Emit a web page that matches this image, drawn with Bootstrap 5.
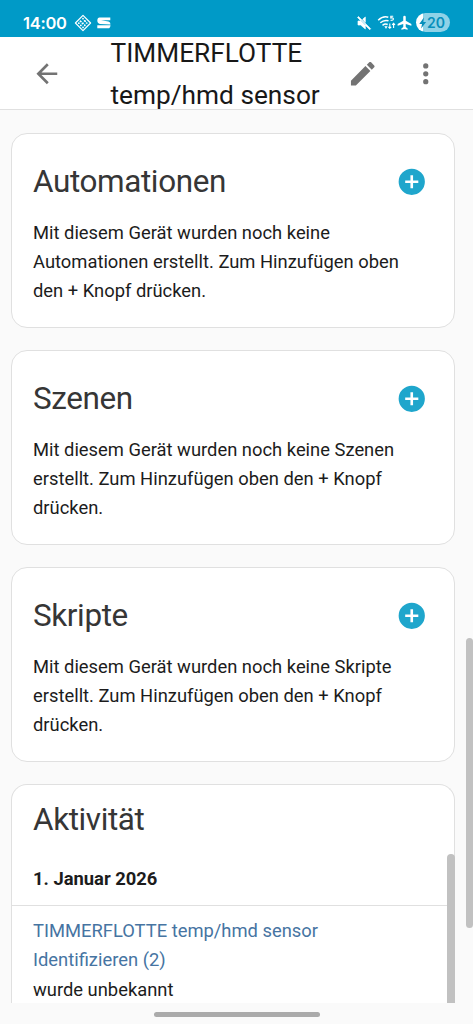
<!DOCTYPE html>
<html lang="de">
<head>
<meta charset="utf-8">
<meta name="viewport" content="width=device-width, initial-scale=1">
<title>TIMMERFLOTTE temp/hmd sensor</title>
<link href="https://cdn.jsdelivr.net/npm/bootstrap@5.3.0/dist/css/bootstrap.min.css" rel="stylesheet">
<style>
  html, body { height: 100%; }
  body { font-family: Roboto, sans-serif; font-size: 18.38px; line-height: 29.3px; color: #1c1c1c; background: #fafafa; overflow: hidden; }
  .screen { height: 1024px; }
  .status { height: 37px; background: #009ac7; color: #fff; padding: 8px 23px 0 23px; }
  .clock { font-family: Inter, sans-serif; font-size: 16.5px; font-weight: 600; line-height: 28px; width: 51px; white-space: nowrap; letter-spacing: -.25px; }
  .battery { width: 34px; height: 19px; border-radius: 10px; margin-left: 4px; background: linear-gradient(90deg, #fff 7px, #8fd2e7 7px); color: #078fbb; font: 600 14px/19px Inter, sans-serif; padding: 0 5px 0 1px; }
  .topbar { height: 73px; background: #fff; border-bottom: 1px solid #e0e0e0; padding: 1px 31.5px 0 31px; color: #737373; }
  .topbar h1 { font-size: 26.25px; line-height: 42px; font-weight: 400; color: #181818; margin-left: 48px; white-space: nowrap; }
  .ico { width: 31.5px; height: 31.5px; fill: currentColor; flex: none; display: block; }
  .view { padding: 23px 18px 0 11px; gap: 22px; height: 893px; }
  .panel { --bs-card-border-color: #e0e0e0; --bs-card-border-radius: 16px; --bs-card-inner-border-radius: 15px; --bs-card-bg: #fff; color: inherit; height: 195px; flex: none; padding: 0 26.5px 0 21px; }
  .panel h2 { font-size: 31.45px; line-height: 48px; font-weight: 400; letter-spacing: -.38px; color: #363636; }
  .panel-head { margin-top: 23.6px; }
  .panel p { margin-top: 12px; white-space: nowrap; }
  .add { color: #1fa6cc; }
  .panel.activity { height: 219px; border-bottom: 0; border-radius: 16px 16px 0 0; padding: 0; }
  .activity h2 { padding: 11px 0 0 21px; flex: none; }
  .day { padding: 20px 21px 11px; height: 62px; border-bottom: 1px solid #e0e0e0; font-weight: 700; flex: none; }
  .entry { padding: 10px 21px 0; flex: none; }
  .entry a { color: #4674a2; }
  .bar-inner { position: absolute; right: -1px; top: 69px; width: 8px; bottom: 0; background: #c1c1c1; border-radius: 4px 4px 0 0; }
  .bar-page { position: absolute; right: 0; top: 638px; width: 7px; height: 290px; background: #c1c1c1; border-radius: 4px; }
  .home { width: 166px; height: 5px; border-radius: 3px; background: #ababab; margin-top: 9px; }
</style>
<script src="https://cdn.jsdelivr.net/npm/bootstrap@5.3.0/dist/js/bootstrap.bundle.min.js"></script>
</head>
<body>
<div class="screen position-relative overflow-hidden">
  <div class="status d-flex justify-content-between">
    <div class="d-flex align-items-center">
      <span class="clock">14:00</span>
      <svg width="18" height="18" viewBox="0 0 18 18" fill="none" stroke="#fff" aria-hidden="true"><path d="M9 1.4 16.6 9 9 16.6 1.4 9Z" stroke-width="1.2" stroke-linejoin="round"/><path d="M9 4.6v.1M6.4 7.2l.6.4M10.6 6.8l.6.4M4.8 9.2h.1M8.4 9.6l.6-.4M12.6 9h.2M6.8 11.4h.1M10.8 11.2v.3M9 13.4h.1" stroke-width="1.7" stroke-linecap="round"/></svg>
      <svg style="margin-left:5px" width="14" height="12" viewBox="0 0 14 12" fill="#fff" aria-hidden="true"><path d="M2.5 .5H13.3V3.3H4L11.5 4.4Q13.5 5 13.5 7.4L3 6.9Q.3 6.6 .3 3.6 .5.5 2.5.5ZM.3 8.2 13.5 8.2Q13.3 11.3 11.2 11.3H.3Z"/></svg>
    </div>
    <div class="d-flex align-items-center">
      <svg width="16" height="16" viewBox="0 0 24 24" fill="#fff" aria-hidden="true"><path d="M3 9v6h4l7 6v-7L8 8 7 9ZM10 6.5 14 3v8ZM2.3 3.7 3.7 2.3 22 20.6 20.6 22Z" stroke="#fff" stroke-width="1"/></svg>
      <svg style="margin-left:5px" width="20" height="17" viewBox="0 0 20 17" fill="none" stroke="#fff" aria-hidden="true"><path d="M1.2 6.2Q6 1.5 11.3 3.2M3.3 8.8Q7 5.5 11.5 6.8M5.5 11.4Q8 9.4 10.7 10.5" stroke-width="1.5"/><path d="M7.8 12.4h2.4L9 14.4Z" fill="#fff" stroke-width=".6"/><path d="M16.2 2.2h-2.4v1.8q2.6-.4 2.6 1T13.6 6.4M12.8 9.5v4.5M11.4 12.8l1.4 1.5 1.4-1.5M16.6 14V9.4M15.2 10.9l1.4-1.5 1.4 1.5" stroke-width="1.1"/></svg>
      <svg width="15" height="15" viewBox="0 0 24 24" fill="#fff" aria-hidden="true"><path d="M10 3a2 2 0 0 1 4 0V9l9 5.5v2.8L14 14.5v4.7l3 2.2V23.5l-5-1.2-5 1.2v-2.1l3-2.2v-4.7L1 17.3v-2.8L10 9Z"/></svg>
      <div class="battery d-flex align-items-center justify-content-between"><svg width="11" height="12" viewBox="0 0 11 12" fill="currentColor" aria-hidden="true"><path d="M7.5 0 2.5 7H5.5L4.5 12 10 4.8H7Z"/></svg><span>20</span></div>
    </div>
  </div>

  <header class="topbar d-flex align-items-center">
    <svg class="ico" viewBox="0 0 24 24" aria-label="Zurück"><path d="M20,11V13H8L13.5,18.5L12.08,19.92L4.16,12L12.08,4.08L13.5,5.5L8,11H20Z"/></svg>
    <h1 class="mb-0">TIMMERFLOTTE<br>temp/hmd sensor</h1>
    <svg class="ico ms-auto" viewBox="0 0 24 24" aria-label="Bearbeiten"><path d="M20.71,7.04C21.1,6.65 21.1,6 20.71,5.63L18.37,3.29C18,2.9 17.35,2.9 16.96,3.29L15.12,5.12L18.87,8.87M3,17.25V21H6.75L17.81,9.93L14.06,6.18L3,17.25Z"/></svg>
    <svg class="ico" style="margin-left:31.5px" viewBox="0 0 24 24" aria-label="Menü"><path d="M12,16A2,2 0 0,1 14,18A2,2 0 0,1 12,20A2,2 0 0,1 10,18A2,2 0 0,1 12,16M12,10A2,2 0 0,1 14,12A2,2 0 0,1 12,14A2,2 0 0,1 10,12A2,2 0 0,1 12,10M12,4A2,2 0 0,1 14,6A2,2 0 0,1 12,8A2,2 0 0,1 10,6A2,2 0 0,1 12,4Z"/></svg>
  </header>

  <main class="view d-flex flex-column overflow-hidden">
    <section class="card panel">
      <div class="panel-head d-flex align-items-center justify-content-between">
        <h2 class="mb-0">Automationen</h2>
        <svg class="ico add" viewBox="0 0 24 24" aria-label="Hinzufügen"><path d="M17,13H13V17H11V13H7V11H11V7H13V11H17M12,2A10,10 0 0,0 2,12A10,10 0 0,0 12,22A10,10 0 0,0 22,12A10,10 0 0,0 12,2Z"/></svg>
      </div>
      <p class="mb-0">Mit diesem Gerät wurden noch keine<br>Automationen erstellt. Zum Hinzufügen oben<br>den + Knopf drücken.</p>
    </section>
    <section class="card panel">
      <div class="panel-head d-flex align-items-center justify-content-between">
        <h2 class="mb-0">Szenen</h2>
        <svg class="ico add" viewBox="0 0 24 24" aria-label="Hinzufügen"><path d="M17,13H13V17H11V13H7V11H11V7H13V11H17M12,2A10,10 0 0,0 2,12A10,10 0 0,0 12,22A10,10 0 0,0 22,12A10,10 0 0,0 12,2Z"/></svg>
      </div>
      <p class="mb-0">Mit diesem Gerät wurden noch keine Szenen<br>erstellt. Zum Hinzufügen oben den + Knopf<br>drücken.</p>
    </section>
    <section class="card panel">
      <div class="panel-head d-flex align-items-center justify-content-between">
        <h2 class="mb-0">Skripte</h2>
        <svg class="ico add" viewBox="0 0 24 24" aria-label="Hinzufügen"><path d="M17,13H13V17H11V13H7V11H11V7H13V11H17M12,2A10,10 0 0,0 2,12A10,10 0 0,0 12,22A10,10 0 0,0 22,12A10,10 0 0,0 12,2Z"/></svg>
      </div>
      <p class="mb-0">Mit diesem Gerät wurden noch keine Skripte<br>erstellt. Zum Hinzufügen oben den + Knopf<br>drücken.</p>
    </section>
    <section class="card panel activity">
      <h2 class="mb-0">Aktivität</h2>
      <div class="day">1. Januar 2026</div>
      <div class="entry">
        <a class="text-decoration-none" href="#">TIMMERFLOTTE temp/hmd sensor<br>Identifizieren (2)</a><br>wurde unbekannt
      </div>
      <div class="bar-inner"></div>
    </section>
  </main>
  <div class="home mx-auto"></div>
  <div class="bar-page"></div>
</div>
</body>
</html>
